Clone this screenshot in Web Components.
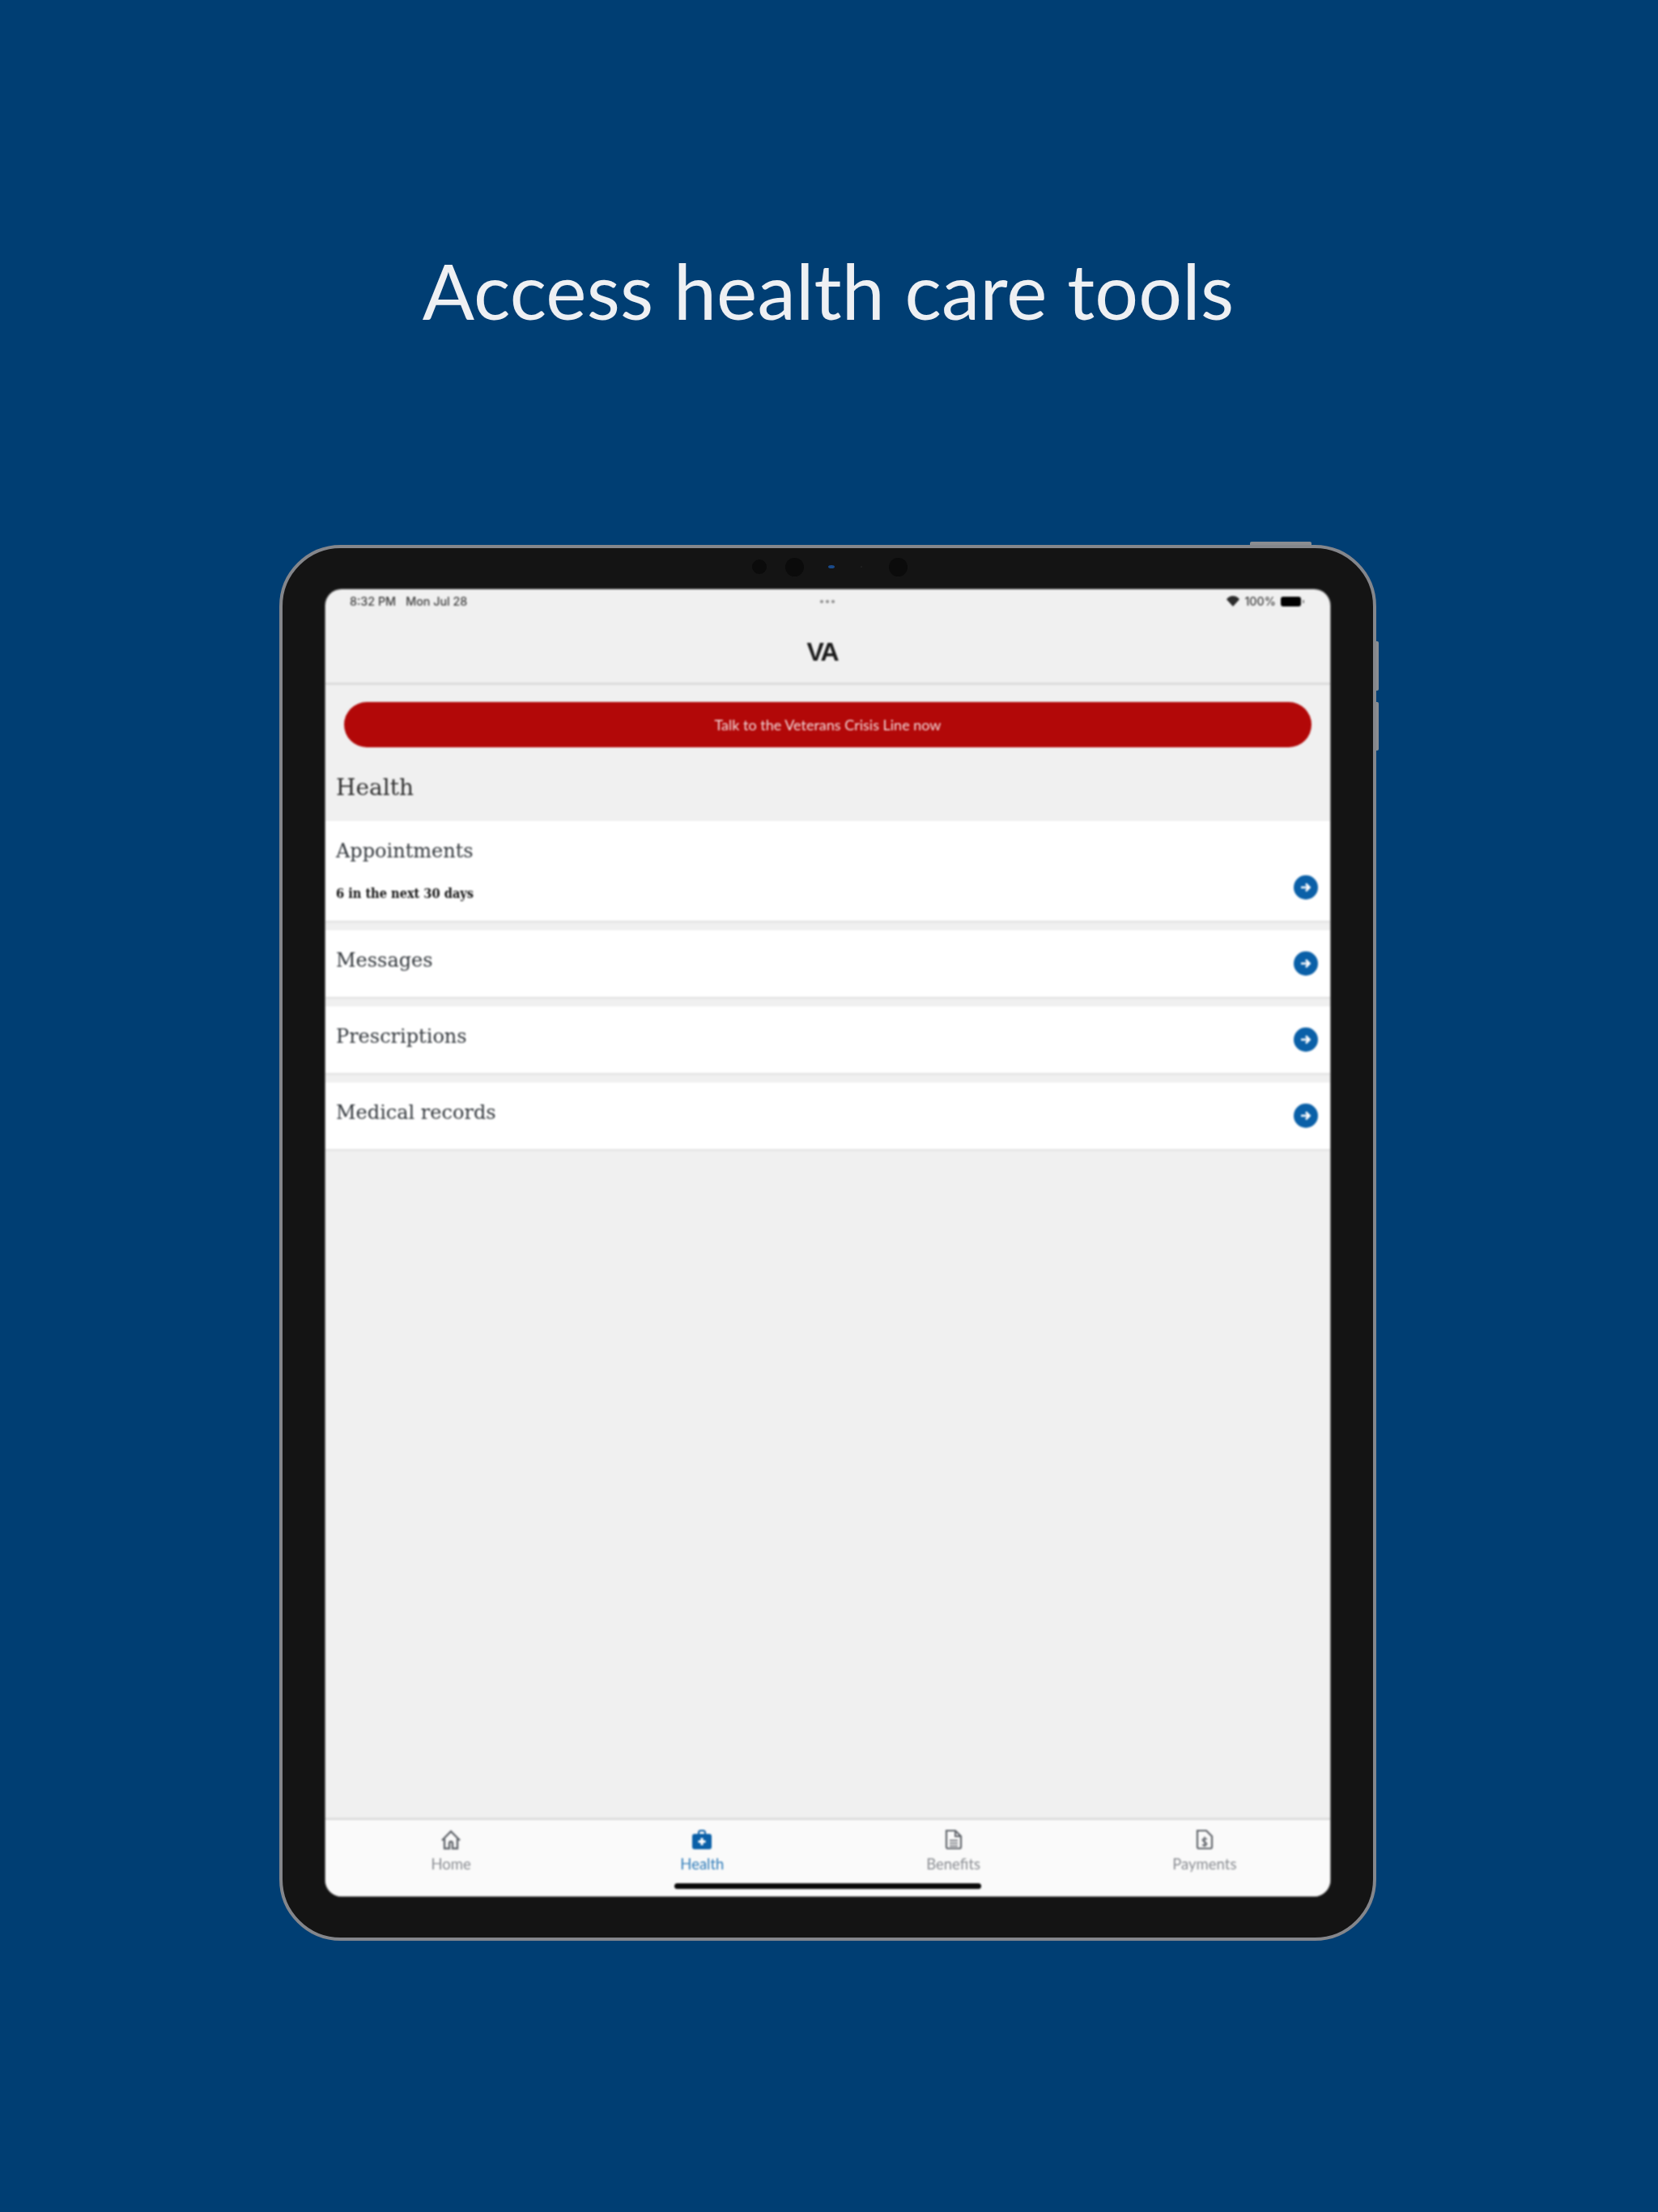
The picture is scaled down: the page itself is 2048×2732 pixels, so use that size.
<!DOCTYPE html>
<html lang="en">
<head>
<meta charset="utf-8">
<title>Access health care tools</title>
<style>
  html, body { margin: 0; padding: 0; }
  body { background: #003e73; width: 2048px; height: 2732px; overflow: hidden; font-family: "Noto Sans", sans-serif; }
</style>
</head>
<body>
<promo-page heading="Access health care tools">
  <tablet-frame>
    <status-bar></status-bar>
    <app-header label="VA"></app-header>
    <crisis-button>Talk to the Veterans Crisis Line now</crisis-button>
    <section-heading>Health</section-heading>
    <nav-row label="Appointments" detail="6 in the next 30 days"></nav-row>
    <nav-row label="Messages"></nav-row>
    <nav-row label="Prescriptions"></nav-row>
    <nav-row label="Medical records"></nav-row>
    <tab-bar slot="tabs">
      <tab-item label="Home" icon="home"></tab-item>
      <tab-item label="Health" icon="health" active></tab-item>
      <tab-item label="Benefits" icon="benefits"></tab-item>
      <tab-item label="Payments" icon="payments"></tab-item>
    </tab-bar>
  </tablet-frame>
</promo-page>

<script>
// small helper so every element below reads the same
function shadow(el, html) {
  el.attachShadow({ mode: "open" }).innerHTML = html;
}

const SANS = `"Lato", "Noto Sans", sans-serif`;
const SLAB = `"DejaVu Serif", "Liberation Serif", serif`;

class PromoPage extends HTMLElement {
  connectedCallback() {
    shadow(this, `
      <style>
        :host { display: block; }
        h1 {
          margin: 0;
          padding: 308px 2px 0 0;
          height: 673px;
          box-sizing: border-box;
          text-align: center;
          font: 400 95px/100px ${SANS};
          letter-spacing: 0.200px;
          color: #eef0f3;
        }
      </style>
      <h1>${this.getAttribute("heading")}</h1>
      <slot></slot>`);
  }
}

class TabletFrame extends HTMLElement {
  connectedCallback() {
    shadow(this, `
      <style>
        :host {
          display: block;
          position: relative;
          box-sizing: border-box;
          width: 1355px;
          height: 1724px;
          margin-left: 345px;
          padding: 51px 53px 51px 53px;
          background: #141414;
          border: 4px solid #84868b;
          border-radius: 76px;
        }
        .screen {
          display: flex;
          flex-direction: column;
          height: 100%;
          background: #f0f0f0;
          border-radius: 20px;
          overflow: hidden;
          box-shadow: 0 0 0 1px #6d6d6d;
          filter: blur(0.8px);
        }
        .main { flex: 1; }
        .cam { position: absolute; top: 14px; border-radius: 50%; background: #0b0b0b; }
        .btn { position: absolute; background: #8b8d91; }
      </style>
      <span class="btn" style="left:1195px;top:-8px;width:76px;height:4px;border-radius:2px 2px 0 0"></span>
      <span class="btn" style="right:-7px;top:115px;width:3px;height:61px;border-radius:0 2px 2px 0"></span>
      <span class="btn" style="right:-7px;top:190px;width:3px;height:60px;border-radius:0 2px 2px 0"></span>
      <span class="cam" style="left:580px;width:18px;height:18px"></span>
      <span class="cam" style="left:621px;top:12px;width:23px;height:23px"></span>
      <span class="cam" style="left:674px;top:21px;width:8px;height:4px;background:#1a4a8a"></span>
      <span class="cam" style="left:714px;top:22px;width:2px;height:2px;background:#222"></span>
      <span class="cam" style="left:749px;top:12px;width:23px;height:23px"></span>
      <div class="screen">
        <div class="main"><slot></slot></div>
        <slot name="tabs"></slot>
      </div>`);
  }
}

class StatusBar extends HTMLElement {
  connectedCallback() {
    shadow(this, `
      <style>
        :host {
          display: flex;
          align-items: center;
          height: 30px;
          padding: 0 31px 0 30px;
          font: 500 14.300px/1 "Inter", "Liberation Sans", sans-serif;
          color: #3d3d3d;
        }
        .left, .right { flex: 1; display: flex; align-items: center; }
        .left { gap: 12px; }
        .right { justify-content: flex-end; gap: 6px; }
        .dots { display: flex; gap: 3px; }
        .dots i { width: 4px; height: 4px; border-radius: 50%; background: #8c8c8c; }
        .batt { width: 25px; height: 12px; border-radius: 3px; background: #000; margin-right: 5px; position: relative; }
        .batt::after { content: ""; position: absolute; right: -4px; top: 4px; width: 2px; height: 4px; background: #888; }
      </style>
      <div class="left"><span>8:32 PM</span><span>Mon Jul 28</span></div>
      <div class="dots"><i></i><i></i><i></i></div>
      <div class="right">
        <svg width="16" height="13" viewBox="0 0 16 13"><path d="M8 13 0 4.2Q3.4 0 8 0t8 4.2z" fill="#2c2c2c"/></svg>
        <span>100%</span><span class="batt"></span>
      </div>`);
  }
}

class AppHeader extends HTMLElement {
  connectedCallback() {
    shadow(this, `
      <style>
        :host {
          display: flex;
          justify-content: center;
          align-items: center;
          height: 76px;
          padding-top: 9px;
          padding-right: 14px;
          box-sizing: content-box;
          border-bottom: 3px solid #dcdcdc;
          font: 700 32px/1 "Liberation Sans", sans-serif;
          letter-spacing: -2px;
          color: #1a1a1a;
        }
      </style>
      ${this.getAttribute("label")}`);
  }
}

class CrisisButton extends HTMLElement {
  connectedCallback() {
    shadow(this, `
      <style>
        :host {
          display: flex;
          justify-content: center;
          align-items: center;
          height: 56px;
          margin: 21px 23px 0;
          background: #b20808;
          border-radius: 28px;
          font: 400 18px/1 ${SANS};
          color: #f2dcdc;
        }
      </style>
      <slot></slot>`);
  }
}

class SectionHeading extends HTMLElement {
  connectedCallback() {
    shadow(this, `
      <style>
        :host {
          display: flex;
          align-items: center;
          box-sizing: border-box;
          height: 91px;
          padding: 8px 0 0 13px;
          font: 400 28px/1 ${SLAB};
          color: #2e2e2e;
        }
      </style>
      <slot></slot>`);
  }
}

class NavRow extends HTMLElement {
  connectedCallback() {
    const detail = this.getAttribute("detail");
    shadow(this, `
      <style>
        :host {
          display: flex;
          justify-content: space-between;
          box-sizing: border-box;
          height: ${detail ? 123 : 82}px;
          margin-bottom: 12px;
          padding: 20px 15px 0 13px;
          background: #fff;
          box-shadow: 0 3px 0 #e6e6e6;
        }
        .label { font: 400 24px/34px ${SLAB}; color: #33383d; }
        .detail { margin-top: 26px; font: 700 16.200px/20px ${SLAB}; font-stretch: condensed; color: #111; }
        svg { align-self: flex-end; margin-bottom: 26px; }
      </style>
      <div>
        <div class="label">${this.getAttribute("label")}</div>
        ${detail ? `<div class="detail">${detail}</div>` : ""}
      </div>
      <svg width="30" height="30" viewBox="0 0 30 30">
        <circle cx="15" cy="15" r="15" fill="#0a60a8"/>
        <path d="M9 15h10M15 10.500 19.500 15 15 19.500" fill="none" stroke="#fff" stroke-width="2.600"/>
      </svg>`);
  }
}

class TabBar extends HTMLElement {
  connectedCallback() {
    shadow(this, `
      <style>
        :host {
          display: grid;
          grid-template-columns: repeat(4, 1fr);
          position: relative;
          box-sizing: border-box;
          height: 97px;
          padding-top: 12px;
          background: #fafafa;
          border-top: 3px solid #dedede;
        }
        .home-line {
          position: absolute;
          left: 431px;
          bottom: 9px;
          width: 379px;
          height: 7px;
          border-radius: 4px;
          background: #0a0a0a;
        }
      </style>
      <slot></slot>
      <span class="home-line"></span>`);
  }
}

const TAB_ICONS = {
  home: `<path d="M2 13 13 2l11 11M5 11v12h6v-6q0-2.500 2-2.500t2 2.500v6h6V11" fill="none" stroke="currentColor" stroke-width="2.400"/>`,
  health: `<path d="M9 5V3.500Q9 1 11.500 1h3Q17 1 17 3.500V5" fill="none" stroke="currentColor" stroke-width="2"/><rect x="1" y="5" width="24" height="19" rx="3" fill="currentColor"/><path d="M13 10v9M8.500 14.500h9" stroke="#fff" stroke-width="3"/>`,
  benefits: `<path d="M4 1h11l7 7v13q0 2-2 2H6q-2 0-2-2z" fill="none" stroke="currentColor" stroke-width="2.200"/><path d="M15 1v7h7" fill="none" stroke="currentColor" stroke-width="2"/><path d="M8 13h10M8 16.500h10M8 20h10" stroke="currentColor" stroke-width="1.500"/>`,
  payments: `<path d="M4 1h11l7 7v13q0 2-2 2H6q-2 0-2-2z" fill="none" stroke="currentColor" stroke-width="2.200"/><path d="M16 11.500Q13 10 11 11.500T13 15t2 3.500-5 0M13 8.500v12.500" fill="none" stroke="currentColor" stroke-width="1.600"/>`
};

class TabItem extends HTMLElement {
  connectedCallback() {
    const active = this.hasAttribute("active");
    shadow(this, `
      <style>
        :host {
          display: flex;
          flex-direction: column;
          align-items: center;
          gap: 7px;
          font: 400 18.500px/20px ${SANS};
          color: ${active ? "#2f7cb9" : "#8b8e93"};
        }
        svg { color: ${active ? "#0a60a8" : "#62666c"}; display: block; }
      </style>
      <svg width="26" height="25" viewBox="0 0 26 25">${TAB_ICONS[this.getAttribute("icon")]}</svg>
      <span>${this.getAttribute("label")}</span>`);
  }
}

customElements.define("promo-page", PromoPage);
customElements.define("tablet-frame", TabletFrame);
customElements.define("status-bar", StatusBar);
customElements.define("app-header", AppHeader);
customElements.define("crisis-button", CrisisButton);
customElements.define("section-heading", SectionHeading);
customElements.define("nav-row", NavRow);
customElements.define("tab-bar", TabBar);
customElements.define("tab-item", TabItem);
</script>
</body>
</html>
